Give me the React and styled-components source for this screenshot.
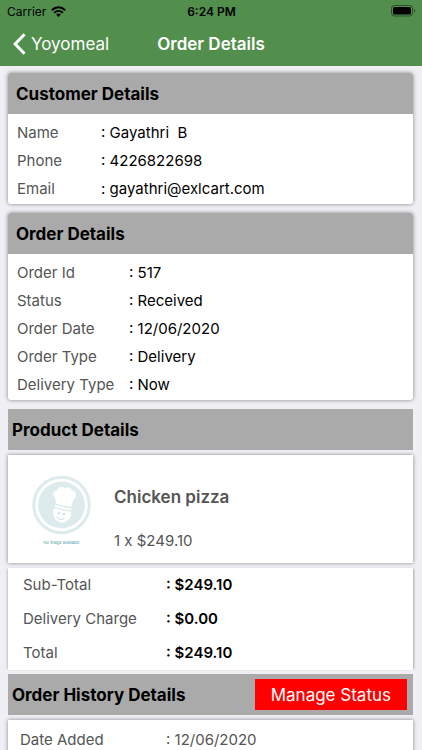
import React from 'react';
import styled, { createGlobalStyle } from 'styled-components';

const GlobalStyle = createGlobalStyle`
  * {
    box-sizing: border-box;
  }
  body {
    margin: 0;
    background: #efeff4;
    font-family: Inter, "Liberation Sans", sans-serif;
    font-size: 15px;
    color: #000;
  }
`;

const Screen = styled.div`
  display: flex;
  flex-direction: column;
  height: 100vh;
`;

const TopBar = styled.header`
  flex: none;
  background: #528f4d;
`;

const StatusBar = styled.div`
  display: grid;
  grid-template-columns: 1fr auto 1fr;
  align-items: center;
  height: 22px;
  padding: 0 6px 0 7px;
  font-size: 12px;
`;

const Carrier = styled.span`
  display: flex;
  align-items: center;
  gap: 5px;
`;

const Clock = styled.span`
  font-weight: 600;
`;

const BatteryIcon = styled.svg`
  justify-self: end;
`;

const NavBar = styled.nav`
  display: grid;
  grid-template-columns: 1fr auto 1fr;
  align-items: center;
  height: 44px;
  padding: 0 13px;
  font-size: 17px;
  color: #fff;
`;

const BackLink = styled.a`
  display: flex;
  align-items: center;
  gap: 5px;
  color: inherit;
  text-decoration: none;
`;

const NavTitle = styled.h1`
  margin: 0;
  font-size: 17px;
  font-weight: 600;
`;

const Content = styled.main`
  flex: 1;
  min-height: 0;
  padding: 7px 9px 0 8px;
  overflow-y: auto;
  scrollbar-width: none;
`;

const Card = styled.section`
  margin-bottom: 9px;
  overflow: hidden;
  background: #fff;
  border-radius: 3px;
  box-shadow: 0 0 4px rgba(0, 0, 0, 0.45);
`;

const SectionHeader = styled.div`
  display: flex;
  align-items: center;
  justify-content: space-between;
  height: 41px;
  padding: 0 6px 0 ${(props) => props.$indent};
  background: #aaa;
`;

const SectionTitle = styled.h2`
  margin: 0;
  font-size: 17px;
  font-weight: 700;
`;

const Details = styled.dl`
  margin: 0;
  padding: 5px 9px 1px;
`;

const Row = styled.div`
  display: grid;
  grid-template-columns: ${(props) => props.$label} 1fr;
  line-height: 28px;
`;

const Label = styled.dt`
  color: #555;
`;

const Value = styled.dd`
  margin: 0;
  white-space: pre-wrap;
`;

const ProductCard = styled.article`
  display: flex;
  align-items: flex-start;
  gap: 8px;
  margin: 5px 0;
  padding: 14px 16px 12px;
  background: #fff;
  box-shadow: 0 0 4px rgba(0, 0, 0, 0.45);
`;

const ProductText = styled.div`
  display: flex;
  flex-direction: column;
  gap: 24px;
  padding-top: 18px;
  line-height: 20px;
  color: #555;
`;

const ProductName = styled.h3`
  margin: 0;
  font-size: 17px;
  font-weight: 600;
`;

const Totals = styled.dl`
  margin: 0 0 4px;
  background: #fff;
  box-shadow: 2px 0 2px -1px rgba(0, 0, 0, 0.3), -2px 0 2px -1px rgba(0, 0, 0, 0.2);
`;

const TotalRow = styled(Row)`
  padding: 0 15px;
  line-height: 34px;
`;

const Amount = styled(Value)`
  font-weight: 600;
`;

const ManageButton = styled.button`
  height: 31px;
  padding: 0 16px;
  border: 0;
  background: #f00;
  color: #fff;
  font-family: inherit;
  font-size: 17px;
`;

const HistoryCard = styled(Card)`
  margin-top: 5px;
  border-radius: 0;
`;

const HistoryList = styled.dl`
  margin: 0;
  padding: 6px 12px;
`;

const HistoryValue = styled(Value)`
  color: #555;
`;

const customer = [
  ['Name', 'Gayathri  B'],
  ['Phone', '4226822698'],
  ['Email', 'gayathri@exlcart.com'],
];

const order = [
  ['Order Id', '517'],
  ['Status', 'Received'],
  ['Order Date', '12/06/2020'],
  ['Order Type', 'Delivery'],
  ['Delivery Type', 'Now'],
];

const totals = [
  ['Sub-Total', '$249.10'],
  ['Delivery Charge', '$0.00'],
  ['Total', '$249.10'],
];

const Wifi = () => (
  <svg width="15" height="11" viewBox="0 0 15 11" fill="none" stroke="#000" strokeWidth="2">
    <path d="M0.8 4.2C4.6 0.4 10.4 0.4 14.2 4.2" />
    <path d="M3.2 6.7C5.7 4.3 9.3 4.3 11.8 6.7" />
    <path d="M7.5 11L5.1 8.5C6.4 7.3 8.6 7.3 9.9 8.5Z" fill="#000" stroke="none" />
  </svg>
);

const Battery = () => (
  <BatteryIcon width="25" height="12" viewBox="0 0 25 12">
    <rect x="0.5" y="0.5" width="21" height="10.5" rx="2.8" fill="none" stroke="#000" strokeOpacity="0.45" />
    <rect x="2" y="2" width="18" height="7.5" rx="1.5" />
    <path d="M23 4V7.6C24.6 7 24.6 4.6 23 4Z" fillOpacity="0.5" />
  </BatteryIcon>
);

// placeholder for products without a photo
const NoImage = () => (
  <svg width="82" height="80" viewBox="0 0 82 80" role="img" aria-label="No image available">
    <circle cx="37.5" cy="36" r="27.7" fill="#fff" stroke="#deebed" strokeWidth="3" />
    <circle cx="37.5" cy="36" r="23.4" fill="#deebed" />
    <g fill="#fff">
      <path d="M32.2 34.5L31 28.5C28 26.5 28.8 21.5 33 21.5C34.5 17.8 38.5 17.3 40.5 19.2C43.5 17 47.5 18.5 47.8 21.3C52 21.8 54 27.5 49.7 30.5C48.5 32.5 48.2 34.5 47.7 38C43 37.5 37.5 36.3 32.2 34.5Z" />
      <path d="M30.8 35.8C36 37.8 42.5 39 47.6 39.4L47.3 41.2C41.8 40.8 35.5 39.4 30.6 37.5Z" />
      <path d="M29.8 39C35.5 41 42 42.2 47.2 42.6C47.3 49.5 43 54 37.5 53.6C31.5 53 27.5 46.5 29.8 39Z" />
    </g>
    <circle cx="34.8" cy="44" r="1.3" fill="#cfe1e4" />
    <circle cx="39.8" cy="45" r="1.3" fill="#cfe1e4" />
    <path d="M32.5 47.5C34 51 38.8 51.3 40.3 49" fill="none" stroke="#c3dadd" />
    <text x="37.5" y="75" textAnchor="middle" fontSize="4" fill="#4f9ca3">No image available</text>
  </svg>
);

const DetailRow = ({ label, value, width }) => (
  <Row $label={width}>
    <Label>{label}</Label>
    <Value>: {value}</Value>
  </Row>
);

const App = () => {
  return (
    <Screen>
      <GlobalStyle />
      <TopBar>
        <StatusBar>
          <Carrier>Carrier <Wifi /></Carrier>
          <Clock>6:24 PM</Clock>
          <Battery />
        </StatusBar>
        <NavBar>
          <BackLink href="#yoyomeal">
            <svg width="13" height="22" viewBox="0 0 13 22" fill="none" stroke="#fff" strokeWidth="3">
              <path d="M11.5 1.2L2.2 11L11.5 20.8" />
            </svg>
            Yoyomeal
          </BackLink>
          <NavTitle>Order Details</NavTitle>
        </NavBar>
      </TopBar>

      <Content>
        <Card>
          <SectionHeader $indent="8px">
            <SectionTitle>Customer Details</SectionTitle>
          </SectionHeader>
          <Details>
            {customer.map(([label, value]) => (
              <DetailRow key={label} label={label} value={value} width="84px" />
            ))}
          </Details>
        </Card>

        <Card>
          <SectionHeader $indent="8px">
            <SectionTitle>Order Details</SectionTitle>
          </SectionHeader>
          <Details>
            {order.map(([label, value]) => (
              <DetailRow key={label} label={label} value={value} width="112px" />
            ))}
          </Details>
        </Card>

        <SectionHeader $indent="4px">
          <SectionTitle>Product Details</SectionTitle>
        </SectionHeader>
        <ProductCard>
          <NoImage />
          <ProductText>
            <ProductName>Chicken pizza</ProductName>
            <span>1 x $249.10</span>
          </ProductText>
        </ProductCard>
        <Totals>
          {totals.map(([label, value]) => (
            <TotalRow key={label} $label="143px">
              <Label>{label}</Label>
              <Amount>: {value}</Amount>
            </TotalRow>
          ))}
        </Totals>

        <SectionHeader $indent="4px">
          <SectionTitle>Order History Details</SectionTitle>
          <ManageButton type="button">Manage Status</ManageButton>
        </SectionHeader>
        <HistoryCard>
          <HistoryList>
            <Row $label="146px">
              <Label>Date Added</Label>
              <HistoryValue>: 12/06/2020</HistoryValue>
            </Row>
          </HistoryList>
        </HistoryCard>
      </Content>
    </Screen>
  );
};

export default App;
